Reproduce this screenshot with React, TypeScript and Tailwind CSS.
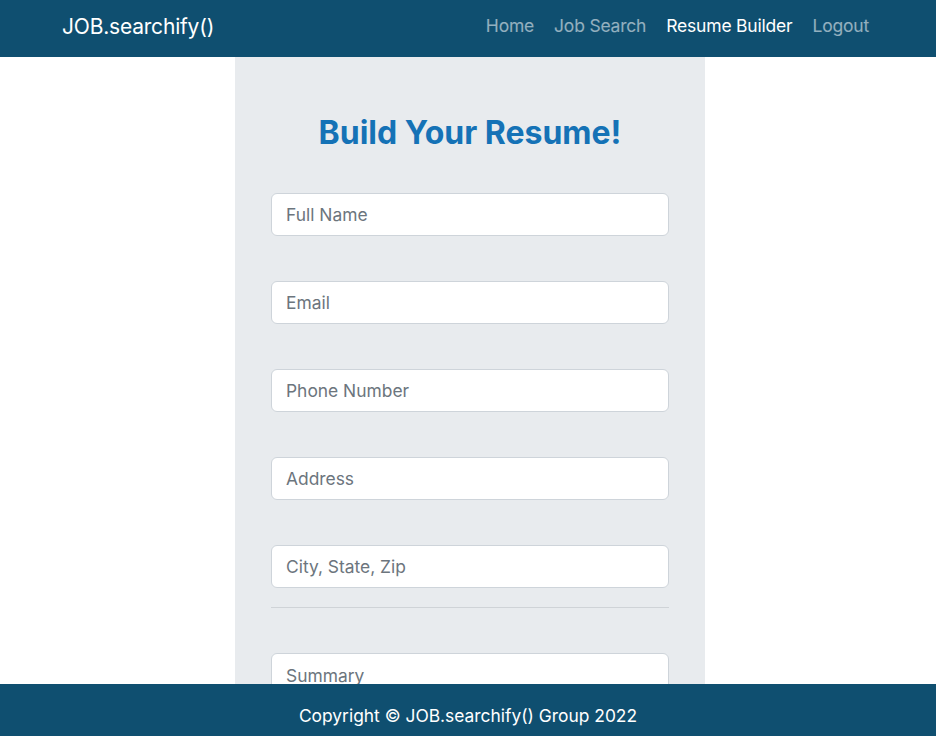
import React from 'react';

export default function App() {
  const fields = ['Full Name', 'Email', 'Phone Number', 'Address', 'City, State, Zip'];

  return (
    <div className="min-h-screen bg-white font-['Inter',sans-serif]">
      {/* Navbar */}
      <nav className="h-[57px] bg-[#0f4f70] flex items-center justify-between pl-[62px] pr-[67px] pb-[4px]">
        <span className="text-white text-[21px] leading-none tracking-[-0.2px]">JOB.searchify()</span>
        <div className="flex items-center gap-[20px] text-[17.5px] tracking-[-0.2px]">
          <a className="text-white/55">Home</a>
          <a className="text-white/55">Job Search</a>
          <a className="text-white">Resume Builder</a>
          <a className="text-white/55">Logout</a>
        </div>
      </nav>

      {/* Form panel */}
      <div className="w-[470px] ml-[235px] bg-[#e8ebee] px-[36px] pt-[56px] pb-[120px]">
        <h1 className="text-center text-[32px] font-bold text-[#1572b6] leading-tight">
          Build Your Resume!
        </h1>
        <div className="mt-[40px] flex flex-col gap-[45px]">
          {fields.map((f) => (
            <input
              key={f}
              placeholder={f}
              className="h-[43px] w-full bg-white border border-[#ced4da] rounded-[6px] px-[14px] text-[17.4px] placeholder:text-[#6c757d] outline-none"
            />
          ))}
        </div>
        <hr className="mt-[19px] border-t border-[#cfd3d7]" />
        <div className="mt-[45px]">
          <textarea
            placeholder="Summary"
            rows={4}
            className="w-full bg-white border border-[#ced4da] rounded-[6px] px-[14px] py-[9px] text-[17.4px] placeholder:text-[#6c757d] outline-none resize-none"
          />
        </div>
      </div>

      {/* Footer */}
      <footer className="fixed bottom-0 left-0 right-0 h-[52px] bg-[#0f4f70] flex items-center justify-center pt-[12px]">
        <span className="text-white text-[17.4px]">Copyright © JOB.searchify() Group 2022</span>
      </footer>
    </div>
  );
}
